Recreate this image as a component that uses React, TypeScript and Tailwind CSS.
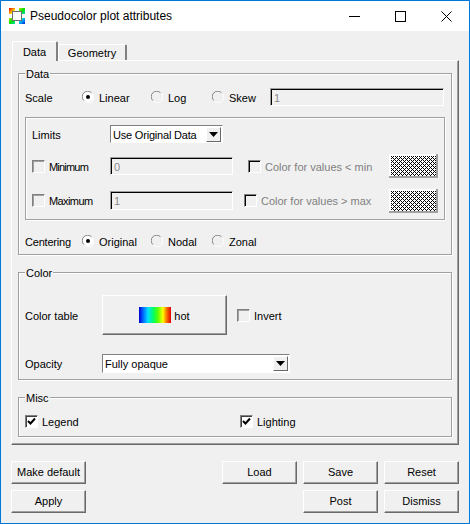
import type { ReactNode } from 'react';

const raised = "border border-t-white border-l-white border-b-[#696969] border-r-[#696969] shadow-[inset_-1px_-1px_0_#a0a0a0]";
const sunken = "border border-t-[#a0a0a0] border-l-[#a0a0a0] border-b-white border-r-white shadow-[inset_1px_1px_0_#000]";
const etched = "border border-[#a0a0a0] shadow-[inset_1px_1px_0_#fff,1px_1px_0_#fff]";

const WindowIcon = () => (
  <svg width="16" height="16" viewBox="0 0 16 16" shapeRendering="crispEdges">
    <defs>
      <linearGradient id="rainbow" x1="0" y1="0" x2="1" y2="1">
        <stop offset="0" stopColor="#e00000" />
        <stop offset="0.25" stopColor="#ffe000" />
        <stop offset="0.5" stopColor="#00e000" />
        <stop offset="0.75" stopColor="#00d8f0" />
        <stop offset="1" stopColor="#0020e0" />
      </linearGradient>
    </defs>
    <rect width="16" height="16" fill="url(#rainbow)" />
    <rect x="6" y="0" width="4" height="16" fill="#fff" />
    <rect x="0" y="6" width="16" height="4" fill="#fff" />
    <rect x="3.5" y="3.5" width="9" height="9" fill="#fff" stroke="#707070" />
  </svg>
);

const Radio = ({ label, checked, width }: { label: string; checked?: boolean; width: string }) => (
  <div className={`flex items-center ${width}`}>
    <svg width="12" height="12" viewBox="0 0 12 12" className="shrink-0">
      <circle cx="6" cy="6" r="5" fill={checked ? "#fff" : "#f0f0f0"} />
      <path d="M1.8 9.5A5.3 5.3 0 0 1 9.5 1.8" fill="none" stroke="#808080" />
      <path d="M2.5 10.2A5.3 5.3 0 0 0 10.2 2.5" fill="none" stroke="#fff" />
      {checked && <circle cx="6" cy="6" r="2" fill="#000" />}
    </svg>
    <span className="ml-[5px]">{label}</span>
  </div>
);

const Check = ({ checked, dark }: { checked?: boolean; dark?: boolean }) => (
  <div
    className={`w-[13px] h-[13px] shrink-0 border border-t-[#808080] border-l-[#808080] border-b-white border-r-white flex items-center justify-center ${
      checked ? "bg-white shadow-[inset_1px_1px_0_#404040]" : dark ? "shadow-[inset_1px_1px_0_#000]" : "shadow-[inset_1px_1px_0_#a0a0a0]"
    }`}
  >
    {checked && (
      <svg width="9" height="9" viewBox="0 0 9 9">
        <path d="M1 4l2.5 2.5L8 1.5" fill="none" stroke="#000" strokeWidth="2" />
      </svg>
    )}
  </div>
);

const Combo = ({ text, width, tight }: { text: string; width: string; tight?: boolean }) => (
  <div className={`${width} h-full flex items-center justify-between bg-white border border-t-[#808080] border-l-[#808080] border-b-white border-r-white pl-[2px] pr-px whitespace-nowrap`}>
    <span className={tight ? "tracking-[-0.2px]" : ""}>{text}</span>
    <div className="w-[15px] h-[15px] flex items-center justify-center bg-[#f0f0f0] border border-t-white border-l-white border-b-[#696969] border-r-[#696969]">
      <svg width="9" height="5" viewBox="0 0 9 5">
        <path d="M0 0h9L4.5 5z" fill="#000" />
      </svg>
    </div>
  </div>
);

const Field = ({ value, width }: { value: string; width: string }) => (
  <div className={`${width} h-full flex items-center pl-[3px] text-[#8a8a8a] ${sunken}`}>
    <span>{value}</span>
  </div>
);

const Swatch = ({ id }: { id: string }) => (
  <div className="w-[49px] h-[24px] pl-[2px] pt-[2px] bg-white border-r-[2px] border-b-[2px] border-[#a0a0a0] ml-auto">
    <svg width="100%" height="100%" shapeRendering="crispEdges" className="block">
      <defs>
        <pattern id={id} width="4" height="4" patternUnits="userSpaceOnUse">
          <rect width="4" height="4" fill="#fff" />
          <path d="M0 0h1v1H0zM2 0h1v1H2zM1 1h1v1H1zM0 2h1v1H0zM2 2h1v1H2zM3 3h1v1H3z" fill="#000" />
        </pattern>
      </defs>
      <rect width="100%" height="100%" fill={`url(#${id})`} />
    </svg>
  </div>
);

const Group = ({ title, className, children }: { title: string; className: string; children: ReactNode }) => (
  <div className={`relative w-[434px] pl-[6px] ${etched} ${className}`}>
    <span className="absolute -top-[9px] left-[6px] bg-[#f0f0f0] px-px leading-[14px]">{title}</span>
    {children}
  </div>
);

const Button = ({ label, className = "" }: { label: string; className?: string }) => (
  <button className={`w-[75px] h-[23px] ${raised} ${className}`}>
    <span>{label}</span>
  </button>
);

const Centering = () => (
  <div className="flex items-center h-[18px] mt-[12px]">
    <span className="w-[57px] tracking-[-0.2px]">Centering</span>
    <Radio label="Original" checked width="w-[69px]" />
    <Radio label="Nodal" width="w-[61px]" />
    <Radio label="Zonal" width="w-[58px]" />
  </div>
);

export default function App() {
  return (
    <div
      className="w-[470px] h-[524px] flex flex-col border border-[#0078d7] bg-[#f0f0f0] text-[11px] text-black"
      style={{ fontFamily: '"Liberation Sans", sans-serif' }}
    >
      <div className="h-[30px] shrink-0 bg-white flex items-center">
        <div className="ml-[8px]">
          <WindowIcon />
        </div>
        <span className="ml-[5px] text-[12px]">Pseudocolor plot attributes</span>
        <div className="ml-auto flex">
          <div className="w-[46px] h-[30px] flex items-center justify-center">
            <svg width="11" height="11" viewBox="0 0 11 11" shapeRendering="crispEdges">
              <path d="M0 5.5h11" stroke="#000" />
            </svg>
          </div>
          <div className="w-[46px] h-[30px] flex items-center justify-center">
            <svg width="11" height="11" viewBox="0 0 11 11" shapeRendering="crispEdges">
              <rect x="0.5" y="0.5" width="10" height="10" fill="none" stroke="#000" />
            </svg>
          </div>
          <div className="w-[46px] h-[30px] flex items-center justify-center">
            <svg width="11" height="11" viewBox="0 0 11 11">
              <path d="M0.5 0.5l10 10M10.5 0.5l-10 10" stroke="#000" />
            </svg>
          </div>
        </div>
      </div>

      <div className="flex-1 px-[10px] [&_span]:pt-[2px]">
        <div className="flex items-end h-[29px] ml-px">
          <div className="relative z-10 w-[46px] h-[20px] -mb-px flex items-center justify-center bg-[#f0f0f0] rounded-t-[2px] border-t border-l border-t-white border-l-white border-r-2 border-r-[#808080]">
            <span>Data</span>
          </div>
          <div className="w-[69px] h-[16px] flex items-center justify-center rounded-t-[2px] border-t border-l border-t-white border-l-white border-r-2 border-r-[#808080]">
            <span>Geometry</span>
          </div>
        </div>

        <div className="w-[448px] h-[385px] flex flex-col gap-[17px] pt-[12px] pl-[6px] border border-t-white border-l-white border-r-[#696969] border-b-[#696969] shadow-[inset_-1px_-1px_0_#a0a0a0]">
          <Group title="Data" className="h-[182px] pt-[14px]">
            <div className="flex items-center h-[18px]">
              <span className="w-[57px]">Scale</span>
              <Radio label="Linear" checked width="w-[69px]" />
              <Radio label="Log" width="w-[61px]" />
              <Radio label="Skew" width="w-[58px]" />
              <Field value="1" width="w-[174px]" />
            </div>

            <div className={`w-[420px] h-[103px] mt-[11px] pt-[7px] pl-[6px] pr-[6px] ${etched}`}>
              <div className="flex items-center h-[18px]">
                <span className="w-[78px]">Limits</span>
                <Combo text="Use Original Data" width="w-[113px]" tight />
              </div>
              <div className="flex items-center h-[18px] mt-[14px]">
                <div className="flex items-center w-[78px]">
                  <Check />
                  <span className="ml-[4px] tracking-[-0.8px]">Minimum</span>
                </div>
                <Field value="0" width="w-[123px]" />
                <div className="ml-[15px]">
                  <Check dark />
                </div>
                <span className="ml-[4px] text-[#808080]">{"Color for values < min"}</span>
                <Swatch id="dense-min" />
              </div>
              <div className="flex items-center h-[19px] mt-[16px]">
                <div className="flex items-center w-[78px]">
                  <Check />
                  <span className="ml-[4px] tracking-[-0.6px]">Maximum</span>
                </div>
                <Field value="1" width="w-[123px]" />
                <div className="ml-[11px]">
                  <Check dark />
                </div>
                <span className="ml-[4px] text-[#808080]">{"Color for values > max"}</span>
                <Swatch id="dense-max" />
              </div>
            </div>

            <Centering />
          </Group>

          <Group title="Color" className="h-[108px] pt-[22px]">
            <div className="flex items-center h-[40px]">
              <span className="w-[77px]">Color table</span>
              <button className={`w-[125px] h-[40px] flex items-center justify-center ${raised}`}>
                <div className="w-[32px] h-[16px] bg-[linear-gradient(to_right,#0000d0,#0060ff_12%,#00e0ff_28%,#00ff60_45%,#60ff00_60%,#ffff00_75%,#ff8000_85%,#e00000)]" />
                <span className="ml-[3px]">hot</span>
              </button>
              <div className="ml-[10px]">
                <Check />
              </div>
              <span className="ml-[4px]">Invert</span>
            </div>
            <div className="flex items-center h-[19px] mt-[19px]">
              <span className="w-[77px]">Opacity</span>
              <Combo text="Fully opaque" width="w-[188px]" />
            </div>
          </Group>

          <Group title="Misc" className="h-[40px] pt-[17px]">
            <div className="flex items-center h-[13px]">
              <div className="flex items-center w-[215px]">
                <Check checked />
                <span className="ml-[4px]">Legend</span>
              </div>
              <Check checked />
              <span className="ml-[4px]">Lighting</span>
            </div>
          </Group>
        </div>

        <div className="flex gap-[6px] mt-[16px]">
          <Button label="Make default" className="mr-auto" />
          <Button label="Load" />
          <Button label="Save" />
          <Button label="Reset" />
        </div>
        <div className="flex gap-[6px] mt-[6px]">
          <Button label="Apply" className="mr-auto" />
          <Button label="Post" />
          <Button label="Dismiss" />
        </div>
      </div>
    </div>
  );
}
